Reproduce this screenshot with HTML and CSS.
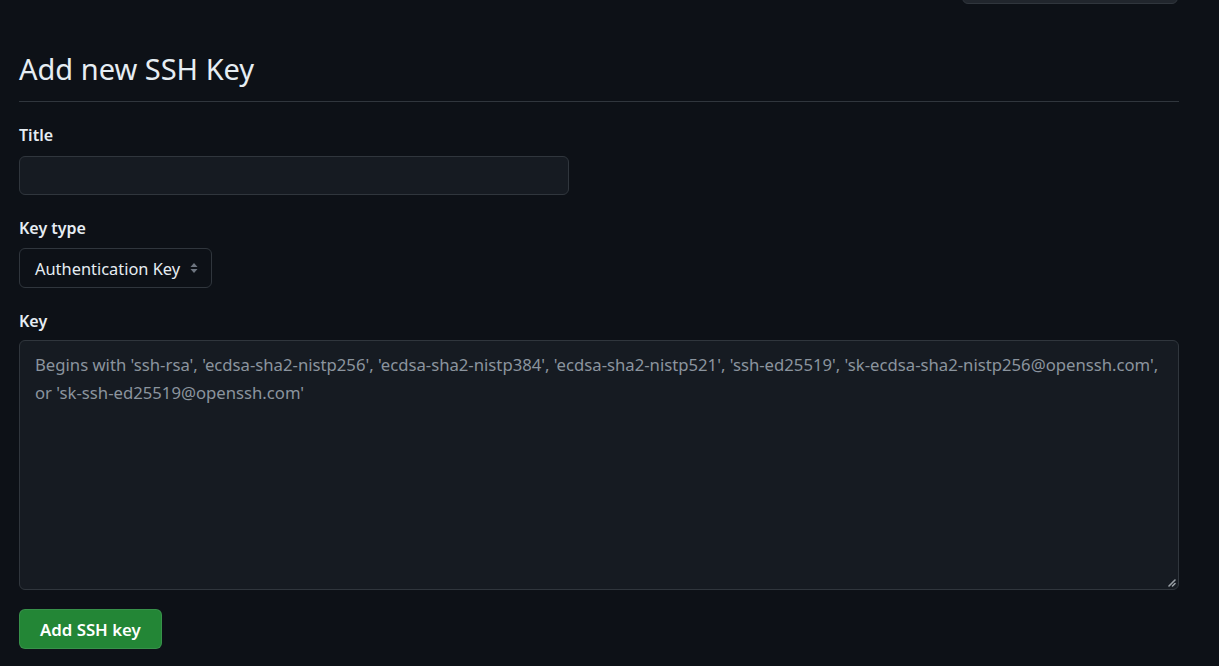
FILE: index.html
```html
<!DOCTYPE html>
<html lang="en">
<head>
<meta charset="utf-8">
<title>Add new SSH Key</title>
<link rel="stylesheet" href="styles.css">
</head>
<body>
<div class="page">
  <div class="topbar">
    <span class="top-button"></span>
  </div>
  <h2 class="heading">Add new SSH Key</h2>
  <form class="form">
    <div class="field field-title">
      <label class="label" for="title">Title</label>
      <input class="input" id="title" type="text">
    </div>
    <div class="field field-type">
      <label class="label" for="keytype">Key type</label>
      <div class="select">
        <span class="select-text">Authentication Key</span>
        <svg class="select-arrows" width="8" height="12" viewBox="0 0 8 12"><path d="M4 1 L7.5 5 H0.5 Z M4 11 L7.5 7 H0.5 Z" fill="#6e7681"/></svg>
      </div>
    </div>
    <div class="field field-key">
      <label class="label" for="key">Key</label>
      <div class="textarea" id="key">
        <div class="placeholder">Begins with 'ssh-rsa', 'ecdsa-sha2-nistp256', 'ecdsa-sha2-nistp384', 'ecdsa-sha2-nistp521', 'ssh-ed25519', 'sk-ecdsa-sha2-nistp256@openssh.com',</div>
        <div class="placeholder">or 'sk-ssh-ed25519@openssh.com'</div>
        <svg class="resize" width="9" height="9" viewBox="0 0 9 9"><path d="M8 2 L2 8 M8 5.5 L5.5 8" stroke="#9aa0a6" stroke-width="1.6" stroke-linecap="round"/></svg>
      </div>
    </div>
    <button class="btn" type="button">Add SSH key</button>
  </form>
</div>
</body>
</html>
```
FILE: styles.css
```css
html, body {
  margin: 0;
  padding: 0;
  background: #0d1117;
  color: #e6edf3;
  font-family: "Noto Sans", "Open Sans", sans-serif;
  font-size: 14px;
}
.page {
  padding: 0 40px 0 19px;
  height: 666px;
  overflow: hidden;
}
.topbar {
  display: flex;
  justify-content: flex-end;
  height: 0;
}
.top-button {
  display: block;
  width: 214px;
  height: 32px;
  margin-top: -30px;
  margin-right: 1px;
  border: 1px solid #30363d;
  border-radius: 6px;
  background: #21262d;
}
.heading {
  margin: 0;
  padding-top: 51px;
  padding-bottom: 14px;
  font-size: 29px;
  font-weight: 400;
  line-height: 36px;
  border-bottom: 1px solid #30363d;
  color: #e6edf3;
}
.form {
  display: flex;
  flex-direction: column;
  align-items: flex-start;
}
.field {
  display: flex;
  flex-direction: column;
  align-items: flex-start;
  width: 100%;
}
.label {
  font-weight: 600;
  font-size: 16px;
  line-height: 20px;
  margin-top: 23px;
  margin-bottom: 10px;
}
.field-title .label {
  margin-top: 23px;
  margin-bottom: 11px;
}
.field-key .label {
  margin-bottom: 9px;
}
.input {
  box-sizing: border-box;
  width: 550px;
  height: 39px;
  background: #161b22;
  border: 1px solid #30363d;
  border-radius: 6px;
  color: #e6edf3;
  font: inherit;
  padding: 5px 12px;
}
.select {
  box-sizing: border-box;
  display: flex;
  align-items: center;
  height: 40px;
  padding: 0 13px 0 15px;
  border: 1px solid #30363d;
  border-radius: 6px;
  background: #0d1117;
  font-size: 16.4px;
}
.select-text { margin-right: 10px; }
.select-arrows { display: block; }
.textarea {
  position: relative;
  box-sizing: border-box;
  width: 100%;
  height: 250px;
  padding: 10px 15px;
  background: #161b22;
  border: 1px solid #30363d;
  border-radius: 6px;
  font-size: 16.7px;
  line-height: 28px;
}
.placeholder {
  color: #8b949e;
  white-space: nowrap;
}
.resize {
  position: absolute;
  right: 2px;
  bottom: 2px;
}
.btn {
  margin-top: 19px;
  height: 40px;
  padding: 0 20px;
  background: #238636;
  color: #ffffff;
  border: 1px solid rgba(240,246,252,0.1);
  border-radius: 6px;
  font: inherit;
  font-size: 16.8px;
  font-weight: 600;
}
```
